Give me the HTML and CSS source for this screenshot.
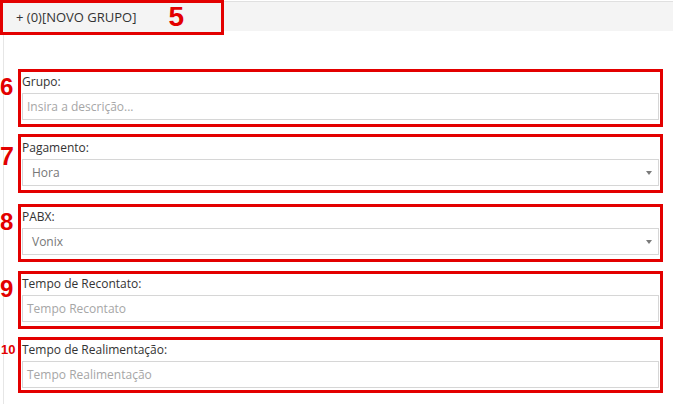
FILE: index.html
```html
<!DOCTYPE html>
<html lang="pt">
<head>
<meta charset="utf-8">
<title>Novo Grupo</title>
<link rel="stylesheet" href="styles.css">
</head>
<body>
<div class="tabs">
  <div class="tab">
    <span class="tab-text">+ (0)[NOVO GRUPO]</span>
    <span class="mark mark-tab">5</span>
  </div>
</div>
<div class="pane">
  <div class="field">
    <span class="mark n6">6</span>
    <label class="label">Grupo:</label>
    <div class="input placeholder">Insira a descrição...</div>
  </div>
  <div class="field field-7">
    <span class="mark n7">7</span>
    <label class="label">Pagamento:</label>
    <div class="input select"><span>Hora</span>
      <svg class="caret" width="6" height="4" viewBox="0 0 6 4"><path d="M0 0H6L3 4Z" fill="#7a7a7a"/></svg>
    </div>
  </div>
  <div class="field">
    <span class="mark n8">8</span>
    <label class="label">PABX:</label>
    <div class="input select"><span>Vonix</span>
      <svg class="caret" width="6" height="4" viewBox="0 0 6 4"><path d="M0 0H6L3 4Z" fill="#7a7a7a"/></svg>
    </div>
  </div>
  <div class="field">
    <span class="mark n9">9</span>
    <label class="label">Tempo de Recontato:</label>
    <div class="input placeholder">Tempo Recontato</div>
  </div>
  <div class="field field-10">
    <span class="mark n10">10</span>
    <label class="label">Tempo de Realimentação:</label>
    <div class="input placeholder">Tempo Realimentação</div>
  </div>
</div>
</body>
</html>
```
FILE: styles.css
```css
html, body {
  margin: 0;
  padding: 0;
  background: #ffffff;
}
body {
  font-family: "Open Sans", "Liberation Sans", sans-serif;
  color: #333333;
  width: 673px;
  height: 404px;
  overflow: hidden;
}
.tabs {
  margin-top: 1px;
  border-top: 1px solid #e0e0e0;
  background: #f4f4f4;
  height: 29px;
  display: flex;
  position: relative;
  z-index: 2;
}
.tab {
  box-sizing: border-box;
  width: 224px;
  height: 35px;
  margin-top: -2px;
  border: 3px solid #e30000;
  background: #f4f4f4;
  display: flex;
  align-items: center;
  padding-left: 13px;
  padding-bottom: 1px;
}
.tab-text {
  font-size: 13px;
  color: #333333;
}
.mark {
  font-family: "Liberation Sans", Arial, sans-serif;
  font-weight: bold;
  color: #e30000;
  line-height: 1;
}
.mark-tab {
  font-size: 28px;
  margin-left: 32px;
}
.pane {
  box-sizing: border-box;
  margin-left: 3px;
  border-left: 1px solid #e6e6e6;
  padding: 38px 10px 0 14px;
  height: 373px;
}
.field {
  position: relative;
  border: 3px solid #e30000;
  padding: 1px 1px 4px 1px;
  margin-bottom: 9px;
}
.field-7 {
  margin-top: -2px;
  padding-top: 2px;
  margin-bottom: 11px;
}
.field-10 {
  margin-top: -1px;
  padding-bottom: 2px;
}
.field .mark {
  position: absolute;
  left: -21px;
  font-size: 24px;
}
.n6 { top: 3px; }
.field .n7 { top: 7px; font-size: 25px; }
.n8 { top: 3px; }
.n9 { top: 3px; }
.field .n10 {
  font-size: 13px;
  top: 3px;
  left: -20px;
}
.label {
  display: block;
  font-size: 12px;
  line-height: 17px;
  margin-bottom: 3px;
  color: #333333;
}
.input {
  box-sizing: border-box;
  height: 27px;
  border: 1px solid #d6d6d6;
  background: #ffffff;
  font-size: 12px;
  display: flex;
  align-items: center;
  padding-left: 4px;
}
.placeholder {
  color: #a6a6a6;
}
.select {
  color: #777777;
  padding-left: 9px;
  padding-right: 6px;
  justify-content: space-between;
}
.caret {
  display: block;
  margin-top: 1px;
}
```
